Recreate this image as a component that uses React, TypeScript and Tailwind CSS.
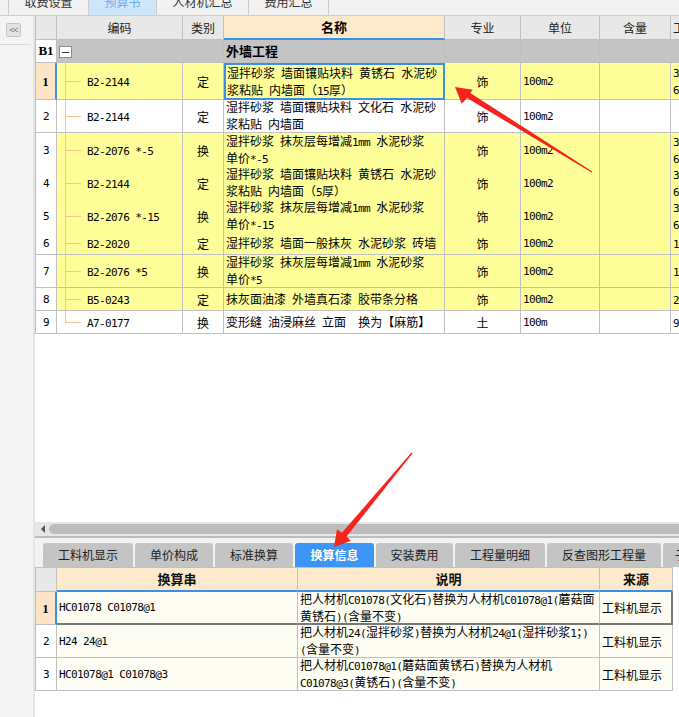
import React from "react";

const ASCII = /^[\x20-\x7e]+$/;
function Tx({ s }: { s: string }) {
  const parts = s.split(/([\x20-\x7e]+)/).filter((p) => p.length > 0);
  return (
    <>
      {parts.map((p, i) =>
        ASCII.test(p) ? (
          <span key={i} className="font-['DejaVu_Sans_Mono',monospace] text-[11px] tracking-[-0.6px] whitespace-pre">
            {p}
          </span>
        ) : (
          <span key={i}>{p}</span>
        )
      )}
    </>
  );
}

const G1 = "grid grid-cols-[21px_126px_41px_221px_76px_79px_71px_80px]";
const G2 = "grid grid-cols-[21px_241px_302px_73px]";
const RB = "border-r border-r-[#c0c0c0]";
const BB = "border-b border-b-[#c0c0c0]";
const RBB = `${RB} ${BB}`;
const TREE = "border-l-[#f7c68a]";

type Row = {
  n: string;
  code: string;
  lb: string;
  name: string[];
  zy: string;
  dw: string;
  last: string[];
  y: boolean;
  h: string;
  sel?: boolean;
  end?: boolean;
};

const rows: Row[] = [
  { n: "1", code: "B2-2144", lb: "定", name: ["湿拌砂浆 墙面镶贴块料 黄锈石 水泥砂", "浆粘贴 内墙面（15厚）"], zy: "饰", dw: "100m2", last: ["3", "6"], y: true, h: "h-[37px]", sel: true },
  { n: "2", code: "B2-2144", lb: "定", name: ["湿拌砂浆 墙面镶贴块料 文化石 水泥砂", "浆粘贴 内墙面"], zy: "饰", dw: "100m2", last: [], y: false, h: "h-[33px]" },
  { n: "3", code: "B2-2076 *-5", lb: "换", name: ["湿拌砂浆 抹灰层每增减1mm 水泥砂浆", "单价*-5"], zy: "饰", dw: "100m2", last: ["3", "6"], y: true, h: "h-[33px]" },
  { n: "4", code: "B2-2144", lb: "定", name: ["湿拌砂浆 墙面镶贴块料 黄锈石 水泥砂", "浆粘贴 内墙面（5厚）"], zy: "饰", dw: "100m2", last: ["3", "6"], y: true, h: "h-[33px]" },
  { n: "5", code: "B2-2076 *-15", lb: "换", name: ["湿拌砂浆 抹灰层每增减1mm 水泥砂浆", "单价*-15"], zy: "饰", dw: "100m2", last: ["3", "6"], y: true, h: "h-[33px]" },
  { n: "6", code: "B2-2020", lb: "定", name: ["湿拌砂浆 墙面一般抹灰 水泥砂浆 砖墙"], zy: "饰", dw: "100m2", last: ["1"], y: true, h: "h-[23px]" },
  { n: "7", code: "B2-2076 *5", lb: "换", name: ["湿拌砂浆 抹灰层每增减1mm 水泥砂浆", "单价*5"], zy: "饰", dw: "100m2", last: ["1"], y: true, h: "h-[33px]" },
  { n: "8", code: "B5-0243", lb: "定", name: ["抹灰面油漆 外墙真石漆 胶带条分格"], zy: "饰", dw: "100m2", last: ["2"], y: true, h: "h-[23px]" },
  { n: "9", code: "A7-0177", lb: "换", name: ["变形缝 油浸麻丝 立面  换为【麻筋】"], zy: "土", dw: "100m", last: ["9"], y: false, h: "h-[23px]", end: true },
];

const brows = [
  { n: "1", a: "HC01078 C01078@1", b: ["把人材机C01078(文化石)替换为人材机C01078@1(蘑菇面", "黄锈石)(含量不变)"], c: "工料机显示", sel: true },
  { n: "2", a: "H24 24@1", b: ["把人材机24(湿拌砂浆)替换为人材机24@1(湿拌砂浆1；)", "(含量不变)"], c: "工料机显示" },
  { n: "3", a: "HC01078@1 C01078@3", b: ["把人材机C01078@1(蘑菇面黄锈石)替换为人材机", "C01078@3(黄锈石)(含量不变)"], c: "工料机显示" },
];

const topTabs = [
  { t: "取费设置", w: "w-[80px]" },
  { t: "预算书", w: "w-[68px]", active: true },
  { t: "人材机汇总", w: "w-[92px]" },
  { t: "费用汇总", w: "w-[80px]" },
];

const botTabs = [
  { t: "工料机显示", w: "w-[90px]" },
  { t: "单价构成", w: "w-[78px]" },
  { t: "标准换算", w: "w-[78px]" },
  { t: "换算信息", w: "w-[79px]", active: true },
  { t: "安装费用", w: "w-[77px]" },
  { t: "工程量明细", w: "w-[90px]" },
  { t: "反查图形工程量", w: "w-[114px]" },
];

function UpperTable() {
  return (
    <div className="w-max border-l border-l-[#c0c0c0]">
      {/* header */}
      <div className={`${G1} h-[24px] text-[12px] text-[#222]`}>
        <div className={`${RBB} bg-[#e8e8e8]`} />
        <div className={`${RBB} bg-[#e8e8e8] flex items-center justify-center`}>编码</div>
        <div className={`${RBB} bg-[#e8e8e8] flex items-center justify-center`}>类别</div>
        <div className={`${RB} border-b-2 border-b-[#3d8fe6] bg-[#fde9cc] flex items-center justify-center font-bold text-[13px] text-black`}>名称</div>
        <div className={`${RBB} bg-[#e8e8e8] flex items-center justify-center`}>专业</div>
        <div className={`${RBB} bg-[#e8e8e8] flex items-center justify-center`}>单位</div>
        <div className={`${RBB} bg-[#e8e8e8] flex items-center justify-center`}>含量</div>
        <div className={`${RBB} bg-[#e8e8e8] flex items-center pl-[2px] whitespace-nowrap overflow-hidden`}>工程量表达式</div>
      </div>
      {/* B1 */}
      <div className={`${G1} h-[23px]`}>
        <div className={`${RBB} bg-white flex items-center justify-center font-['Liberation_Serif',serif] font-bold text-[13px]`}>B1</div>
        <div className={`${RBB} bg-[#c4c4c4] flex flex-col pl-[2px]`}>
          <div className="h-[6px]" />
          <div className="w-[13px] h-[12px] border border-[#8c8c8c] bg-white flex items-center justify-center">
            <div className="w-[7px] h-px bg-[#333]" />
          </div>
          <div className={`flex-1 ml-[6px] border-l ${TREE}`} />
        </div>
        <div className={`${RBB} bg-[#c4c4c4]`} />
        <div className={`${RBB} bg-[#c4c4c4] flex items-center pl-[2px] font-bold text-[13px] whitespace-nowrap`}>外墙工程</div>
        <div className={`${RBB} bg-[#c4c4c4]`} />
        <div className={`${RBB} bg-[#c4c4c4]`} />
        <div className={`${RBB} bg-[#c4c4c4]`} />
        <div className={`${RBB} bg-[#c4c4c4]`} />
      </div>
      {rows.map((r) => {
        const bg = r.y ? "bg-[#ffff99]" : "bg-white";
        return (
          <div key={r.n} className={`${G1} ${r.h} text-[12px] leading-[15px] text-black`}>
            {r.sel ? (
              <div className={`border-r-2 border-r-[#3d8fe6] ${BB} bg-[#fde4c6] flex items-center justify-center font-['Liberation_Serif',serif] font-bold text-[13px]`}>
                {r.n}
              </div>
            ) : (
              <div className={`${RBB} bg-white flex items-center justify-center`}>
                <Tx s={r.n} />
              </div>
            )}
            <div className={`${RBB} ${bg} flex`}>
              <div className="ml-[8px] w-[16px] flex flex-col">
                <div className={`flex-1 border-l border-b ${TREE} border-b-[#f7c68a]`} />
                <div className={`flex-1 ${r.end ? "" : `border-l ${TREE}`}`} />
              </div>
              <div className="ml-[6px] self-center whitespace-nowrap">
                <Tx s={r.code} />
              </div>
            </div>
            <div className={`${RBB} ${bg} flex items-center justify-center`}>{r.lb}</div>
            {r.sel ? (
              <div className={`border-2 border-[#3d8fe6] ${bg} flex flex-col justify-center pl-[1px] overflow-hidden`}>
                {r.name.map((l, i) => (
                  <div key={i} className="whitespace-nowrap">
                    <Tx s={l} />
                  </div>
                ))}
              </div>
            ) : (
              <div className={`${RBB} ${bg} flex flex-col justify-center pl-[2px] overflow-hidden`}>
                {r.name.map((l, i) => (
                  <div key={i} className="whitespace-nowrap">
                    <Tx s={l} />
                  </div>
                ))}
              </div>
            )}
            <div className={`${RBB} ${bg} flex items-center justify-center`}>{r.zy}</div>
            <div className={`${RBB} ${bg} flex items-center pl-[2px]`}>
              <Tx s={r.dw} />
            </div>
            <div className={`${RBB} ${bg}`} />
            <div className={`${RBB} ${bg} flex flex-col justify-center pl-[2px]`}>
              {r.last.map((l, i) => (
                <div key={i}>
                  <Tx s={l + ".25"} />
                </div>
              ))}
            </div>
          </div>
        );
      })}
    </div>
  );
}

function BottomTable() {
  return (
    <div className="w-max border-l border-t border-l-[#c0c0c0] border-t-[#c0c0c0]">
      <div className={`${G2} h-[24px] text-[13px] font-bold text-[#111]`}>
        <div className={`${RBB} bg-[#e8e8e8]`} />
        <div className={`${RB} border-b-2 border-b-[#3d8fe6] bg-[#fde9cc] flex items-center justify-center`}>换算串</div>
        <div className={`${RB} border-b-2 border-b-[#3d8fe6] bg-[#fde9cc] flex items-center justify-center`}>说明</div>
        <div className={`${RB} border-b-2 border-b-[#3d8fe6] bg-[#fde9cc] flex items-center justify-center`}>来源</div>
      </div>
      {brows.map((r) => {
        const bb = r.sel ? "border-b-2 border-b-[#787878]" : BB;
        return (
          <div key={r.n} className={`${G2} h-[33px] text-[12px] leading-[15px] text-black`}>
            {r.sel ? (
              <div className={`border-r-2 border-r-[#3d8fe6] ${BB} bg-[#fde4c6] flex items-center justify-center font-['Liberation_Serif',serif] font-bold text-[13px]`}>
                {r.n}
              </div>
            ) : (
              <div className={`${RBB} bg-white flex items-center justify-center`}>
                <Tx s={r.n} />
              </div>
            )}
            <div className={`${RB} ${bb} bg-[#fdfdf3] flex items-center pl-[2px] whitespace-nowrap`}>
              <Tx s={r.a} />
            </div>
            <div className={`${RB} ${bb} bg-[#fdfdf3] flex flex-col justify-center pl-[2px] overflow-hidden`}>
              {r.b.map((l, i) => (
                <div key={i} className="whitespace-nowrap">
                  <Tx s={l} />
                </div>
              ))}
            </div>
            <div
              className={`${r.sel ? "border-r-2 border-r-[#787878]" : RB} ${bb} bg-[#fdfdf3] flex items-center pl-[2px] whitespace-nowrap`}
            >
              {r.c}
            </div>
          </div>
        );
      })}
    </div>
  );
}

export default function App() {
  return (
    <div className="relative w-[679px] h-[717px] overflow-hidden bg-white font-['Noto_Sans_CJK_SC',sans-serif] text-[12px] text-black">
      {/* top tab bar */}
      <div className="h-[16px] border-b border-b-[#cccccc] bg-[#f2f2f2] flex pl-[8px]">
        {topTabs.map((t) => (
          <div
            key={t.t}
            className={`${t.w} shrink-0 border-l border-l-[#cccccc] overflow-hidden flex justify-center items-start ${
              t.active ? "bg-[#cfe5f9] text-[#6aaeec]" : "text-[#333]"
            }`}
          >
            <span className="-mt-[4px] leading-[12px] text-[12px] whitespace-nowrap">{t.t}</span>
          </div>
        ))}
        <div className="w-[10px] border-l border-l-[#cccccc]" />
      </div>

      <div className="flex h-[701px]">
        {/* sidebar */}
        <div className="w-[35px] shrink-0 bg-[#f4f4f4] border-r-2 border-r-[#e4e4e4] flex flex-col">
          <div className="mt-[7px] ml-[6px] w-[15px] h-[14px] rounded-[2px] border border-[#c4c4c4] bg-[#e4e4e4] flex items-center justify-center text-[9px] leading-none text-[#777] font-['Liberation_Sans',sans-serif] tracking-[-1px]">
            &lt;&lt;
          </div>
          <div className="mt-[7px] h-px w-[31px] bg-[#d9d9d9]" />
        </div>

        {/* main */}
        <div className="flex-1 min-w-0 flex flex-col overflow-hidden">
          <div className="h-[506px] shrink-0 overflow-hidden bg-white">
            <UpperTable />
          </div>
          {/* scrollbar */}
          <div className="h-[14px] shrink-0 bg-[#e6e6e6] flex items-center">
            <div className="ml-[6px] w-0 h-0 border-y-[4px] border-y-transparent border-r-[4px] border-r-[#555]" />
            <div className="ml-[4px] flex-1 h-[10px] rounded-l-full bg-[#bdbdbd]" />
          </div>
          <div className="h-[2px] shrink-0 bg-[#bdbdbd]" />
          {/* tab strip */}
          <div className="h-[29px] shrink-0 bg-[#f2f2f2] flex items-end gap-[2px] pl-[8px]">
            {botTabs.map((t) => (
              <div
                key={t.t}
                className={`${t.w} h-[24px] shrink-0 rounded-t-[3px] flex items-center justify-center text-[12px] whitespace-nowrap ${
                  t.active ? "bg-[#3c95f4] text-white font-bold" : "bg-[#c4c4c4] text-[#222]"
                }`}
              >
                {t.t}
              </div>
            ))}
            <div className="w-[60px] h-[24px] shrink-0 rounded-t-[3px] bg-[#c4c4c4] text-[#222] flex items-center pl-[12px] whitespace-nowrap">
              子目关联
            </div>
          </div>
          <div className="shrink-0">
            <BottomTable />
          </div>
          <div className="flex-1 bg-white" />
        </div>
      </div>

      {/* red annotation arrows */}
      <svg className="absolute inset-0 pointer-events-none" width={679} height={717} viewBox="0 0 679 717">
        <polygon
          fill="#f5241e"
          points="455,87 472.8,89.8 470.2,92.9 592.3,171.5 591.7,172.5 467,98 461.7,103.7"
        />
        <polygon
          fill="#f5241e"
          points="334,547 350.9,540.8 346.5,536.6 412.5,453.4 411.5,452.6 341.9,532.8 337,529.3"
        />
      </svg>
    </div>
  );
}
